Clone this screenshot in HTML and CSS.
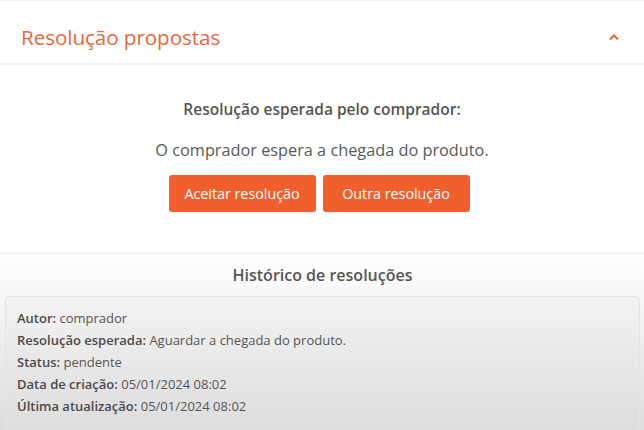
FILE: index.html
```html
<!DOCTYPE html>
<html lang="pt-BR">
<head>
    <meta charset="UTF-8">
    <meta name="viewport" content="width=device-width, initial-scale=1.0">
    <title>Resolução propostas</title>
    <link rel="stylesheet" href="styles.css">
</head>
<body>

<div class="panel">
    <div class="panel-header">
        <h1>Resolução propostas</h1>
        <svg class="chevron" width="12" height="8" viewBox="0 0 12 8">
            <path d="M2 6.5 L6 2.5 L10 6.5" fill="none" stroke="#e8673a" stroke-width="2"/>
        </svg>
    </div>

    <div class="panel-body">
        <h2>Resolução esperada pelo comprador:</h2>
        <p>O comprador espera a chegada do produto.</p>
        <div class="actions">
            <button class="btn">Aceitar resolução</button>
            <button class="btn">Outra resolução</button>
        </div>
    </div>

    <div class="history">
        <h3>Histórico de resoluções</h3>
        <div class="history-card">
            <div><b>Autor:</b> comprador</div>
            <div><b>Resolução esperada:</b> Aguardar a chegada do produto.</div>
            <div><b>Status:</b> pendente</div>
            <div><b>Data de criação:</b> 05/01/2024 08:02</div>
            <div><b>Última atualização:</b> 05/01/2024 08:02</div>
        </div>
    </div>
</div>

</body>
</html>
```

FILE: styles.css
```css
body {
    font-family: "Open Sans", "Noto Sans", sans-serif;
    margin: 0;
    padding: 0;
    background-color: white;
    color: #555;
}

.panel {
    border-top: 1px solid #f0f0f0;
    height: 429px;
    overflow: hidden;
}

.panel-header {
    height: 52px;
    padding: 10px 24px 0 21px;
    display: flex;
    align-items: center;
    justify-content: space-between;
    border-bottom: 2px solid #f1f1f1;
}

.panel-header h1 {
    margin: 0;
    font-size: 20.7px;
    font-weight: 400;
    color: #e8673a;
    letter-spacing: -0.1px;
}

.chevron {
    margin-top: -1px;
}

.panel-body {
    text-align: center;
    padding: 32px 0 41px;
    border-bottom: 1px solid #ededed;
}

.panel-body h2 {
    margin: 0;
    font-size: 15.5px;
    font-weight: 600;
    color: #555;
    line-height: 24px;
}

.panel-body p {
    margin: 17px 0 0;
    font-size: 16.3px;
    line-height: 24px;
    color: #5a5a5a;
}

.actions {
    display: flex;
    justify-content: center;
    gap: 7px;
    margin-top: 13px;
    padding-right: 6px;
}

.btn {
    width: 147px;
    height: 37px;
    background-color: #f05f2c;
    color: white;
    border: none;
    border-radius: 3px;
    font-family: inherit;
    font-size: 14.3px;
    cursor: pointer;
}

.history {
    height: 177px;
    background: linear-gradient(#ffffff, #dcdcdc);
    padding: 0 4px 0 5px;
}

.history h3 {
    margin: 0;
    padding: 8px 0 8px;
    text-align: center;
    font-size: 16px;
    font-weight: 600;
    line-height: 26px;
    color: #555;
}

.history-card {
    border: 1px solid #e4e4e4;
    border-radius: 4px;
    background: linear-gradient(#f3f3f3, #dddddd);
    padding: 11px 11px 12px;
    font-size: 13px;
    line-height: 21.9px;
    color: #555;
}

.history-card b {
    font-weight: 600;
    color: #4a4a4a;
}
```
